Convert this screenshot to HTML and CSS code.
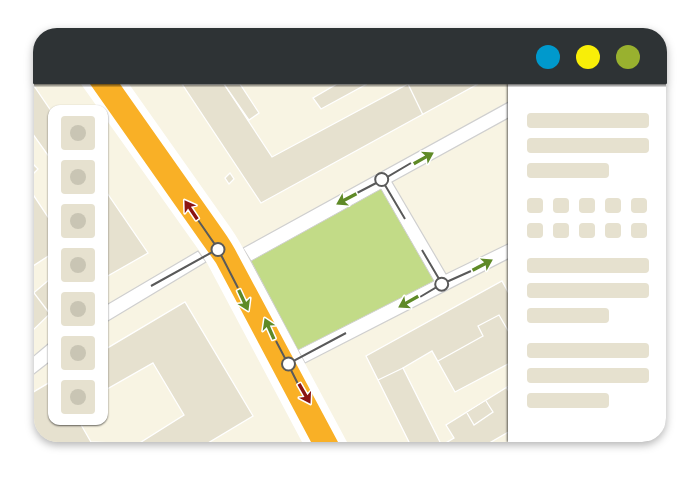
FILE: index.html
```html
<!DOCTYPE html>
<html lang="en">
<head>
    <meta charset="UTF-8">
    <meta name="viewport" content="width=device-width, initial-scale=1.0">
    <title>Map Editor</title>
    <link rel="stylesheet" href="styles.css">
</head>
<body>
    <div class="window">
        <header class="titlebar">
            <span class="light blue"></span>
            <span class="light yellow"></span>
            <span class="light green"></span>
        </header>

        <div class="content">
            <main class="map">
                <svg class="map-canvas" viewBox="34 84 474 358" preserveAspectRatio="xMinYMin slice" role="img" aria-label="Street map">
                    <defs>
                        <path id="arrow" d="M1 0L-10 -7L-8 -1.7H-22V1.7H-8L-10 7Z"/>
                    </defs>

                    <!-- buildings -->
                    <g class="building">
                        <path d="M30 80L148 253L62 302L30 333Z"/>
                        <path d="M182 84L261 203L478 84H408L272 157L224 84Z"/>
                        <path d="M224 84L249 120L259 113L240 84Z"/>
                        <path d="M337 84L313 98L321 109L367 84Z"/>
                        <path d="M225 178L230 173L234 179L229 184Z"/>
                        <path d="M408 84L423 115"/>
                        <path d="M30 394L185 302L253 416L208 443V450H30Z"/>
                        <path d="M413 450L366 356L502 281L512 299V362L455 392L432 351L403 368L444 450Z"/>
                        <path d="M378 380L403 368M438 361L483 336L478 326L499 315L510 334"/>
                        <path d="M444 444L454 438L446 425L512 384V430L491 442L480 450H444Z"/>
                        <path d="M467 413L474 425L493 412L486 401M506 387L510 393"/>
                    </g>
                    <g class="yard">
                        <path d="M30 130L50 158V220L30 190Z"/>
                        <path d="M30 268L50 255V279L30 296Z"/>
                        <path d="M153 363L184 415L138 444L91 442L72 409Z"/>
                    </g>
                    <path class="building" d="M34 293L50 314M32 163L38 169L32 175Z"/>

                    <!-- side streets -->
                    <path class="street" d="M198 251L108 304Q70 325 48 344L30 359V377L48 363Q74 340 108 321L206 262Z"/>
                    <path class="street" d="M243 248L512 100V116L392 182L446 274L512 242V257L305 363L298 350L251 261Z"/>
                    <path class="park" d="M251 261L381 189L434 281L298 350Z"/>

                    <!-- main road -->
                    <path class="road-edge" d="M81 84H129L225 220Q236 235 243 248L347 442H302L207 263L198 249Z"/>
                    <path class="road" d="M90 84H120L222 229Q232 243 238 255L338 442H311L216 263L201 242Z"/>

                    <!-- turn restrictions -->
                    <g class="way">
                        <path d="M151 286L218 249L198 220M218 249L238 288"/>
                        <path d="M276 341L288 364L346 333M288 364L298 384"/>
                        <path d="M357 193L382 180L411 163M382 180L405 219"/>
                        <path d="M420 297L442 284L471 271M442 284L422 250"/>
                    </g>
                    <g class="allowed">
                        <use href="#arrow" transform="translate(248 310) rotate(65)"/>
                        <use href="#arrow" transform="translate(265 319) rotate(-114)"/>
                        <use href="#arrow" transform="translate(433 153) rotate(-29)"/>
                        <use href="#arrow" transform="translate(337 204) rotate(152)"/>
                        <use href="#arrow" transform="translate(492 260) rotate(-28)"/>
                        <use href="#arrow" transform="translate(399 307) rotate(151)"/>
                    </g>
                    <g class="denied">
                        <use href="#arrow" transform="translate(185 201) rotate(-124)"/>
                        <use href="#arrow" transform="translate(310 403) rotate(60)"/>
                    </g>
                    <g class="node">
                        <circle cx="218" cy="249.5" r="6.5"/>
                        <circle cx="288.5" cy="364" r="6.5"/>
                        <circle cx="381.7" cy="179.5" r="6.5"/>
                        <circle cx="441.7" cy="284.2" r="6.5"/>
                    </g>
                </svg>

                <nav class="toolbar" aria-label="Map tools">
                    <button class="tool" type="button" aria-label="Tool 1"></button>
                    <button class="tool" type="button" aria-label="Tool 2"></button>
                    <button class="tool" type="button" aria-label="Tool 3"></button>
                    <button class="tool" type="button" aria-label="Tool 4"></button>
                    <button class="tool" type="button" aria-label="Tool 5"></button>
                    <button class="tool" type="button" aria-label="Tool 6"></button>
                    <button class="tool" type="button" aria-label="Tool 7"></button>
                </nav>
            </main>

            <aside class="panel">
                <div class="lines">
                    <span class="line"></span>
                    <span class="line"></span>
                    <span class="line short"></span>
                </div>
                <div class="swatches">
                    <span class="swatch"></span>
                    <span class="swatch"></span>
                    <span class="swatch"></span>
                    <span class="swatch"></span>
                    <span class="swatch"></span>
                    <span class="swatch"></span>
                    <span class="swatch"></span>
                    <span class="swatch"></span>
                    <span class="swatch"></span>
                    <span class="swatch"></span>
                </div>
                <div class="lines">
                    <span class="line"></span>
                    <span class="line"></span>
                    <span class="line short"></span>
                </div>
                <div class="lines">
                    <span class="line"></span>
                    <span class="line"></span>
                    <span class="line short"></span>
                </div>
            </aside>
        </div>
    </div>
</body>
</html>
```

FILE: styles.css
```css
* {
    margin: 0;
    padding: 0;
    box-sizing: border-box;
}

body {
    font-family: "Liberation Sans", Arial, sans-serif;
    background: #fff;
    padding: 28px 26px 36px 33px;
}

.window {
    filter: drop-shadow(0 3px 4px rgba(0, 0, 0, 0.3));
}

.titlebar {
    display: flex;
    justify-content: flex-end;
    align-items: center;
    gap: 16px;
    height: 56px;
    padding: 2px 27px 0;
    background: #2e3335;
    border-radius: 24px 24px 1px 1px;
    position: relative;
    z-index: 2;
}

/* shadow only under the bar, not round it */
.titlebar::after {
    content: "";
    position: absolute;
    top: 100%;
    left: 1px;
    right: 1px;
    height: 3px;
    background: linear-gradient(rgba(0, 0, 0, 0.6), rgba(0, 0, 0, 0.1));
}

.light {
    width: 24px;
    height: 24px;
    border-radius: 50%;
}

.light.blue {
    background: #0099cc;
}

.light.yellow {
    background: #f8ee08;
}

.light.green {
    background: #99b12f;
}

.content {
    display: flex;
    margin: 0 1px;
    border-radius: 0 0 24px 24px;
    overflow: hidden;
}

/* Map */
.map {
    position: relative;
    display: flex;
    flex: 1;
    min-width: 0;
    background: #f8f4e3;
}

.map-canvas {
    flex: 1;
    min-width: 0;
}

.building {
    fill: #e6e1cf;
    stroke: #fff;
    stroke-width: 1.3;
}

.yard {
    fill: #f8f4e3;
    stroke: #fff;
    stroke-width: 1.3;
}

.street {
    fill: #fff;
    stroke: #cfcfcf;
    stroke-width: 1.2;
}

.park {
    fill: #c2db87;
    stroke: #cfcfcf;
    stroke-width: 1;
}

.road-edge {
    fill: #fff;
}

.road {
    fill: #f9b026;
}

.way {
    fill: none;
    stroke: #5a5a5a;
    stroke-width: 2;
}

.node {
    fill: #fff;
    stroke: #5a5a5a;
    stroke-width: 2;
}

.allowed,
.denied {
    stroke: #fff;
    stroke-width: 3;
    stroke-linejoin: round;
    paint-order: stroke;
}

.allowed {
    fill: #5f8a27;
}

.denied {
    fill: #8b1413;
}

.toolbar {
    position: absolute;
    top: 21px;
    left: 14px;
    display: flex;
    flex-direction: column;
    gap: 10px;
    padding: 11px 13px;
    background: #fff;
    border-radius: 12px;
    box-shadow: 0 1px 2px rgba(0, 0, 0, 0.6);
}

.tool {
    display: flex;
    align-items: center;
    justify-content: center;
    width: 34px;
    height: 34px;
    background: #e6e1cf;
    border: none;
    border-radius: 4px;
    cursor: pointer;
}

.tool::before {
    content: "";
    width: 16px;
    height: 16px;
    background: #c9c5b4;
    border-radius: 50%;
}

/* Side panel */
.panel {
    display: flex;
    flex-direction: column;
    gap: 20px;
    width: 158px;
    padding: 29px 17px 34px 19px;
    background: #fff;
    box-shadow: -1px 0 2px rgba(0, 0, 0, 0.6);
    position: relative;
}

.lines {
    display: flex;
    flex-direction: column;
    gap: 10px;
}

.line {
    height: 15px;
    background: #e6e1cf;
    border-radius: 4px;
}

.line.short {
    width: 82px;
}

.swatches {
    display: grid;
    grid-template-columns: repeat(5, 16px);
    gap: 10px;
}

.swatch {
    height: 15px;
    background: #e6e1cf;
    border-radius: 4px;
}
```
